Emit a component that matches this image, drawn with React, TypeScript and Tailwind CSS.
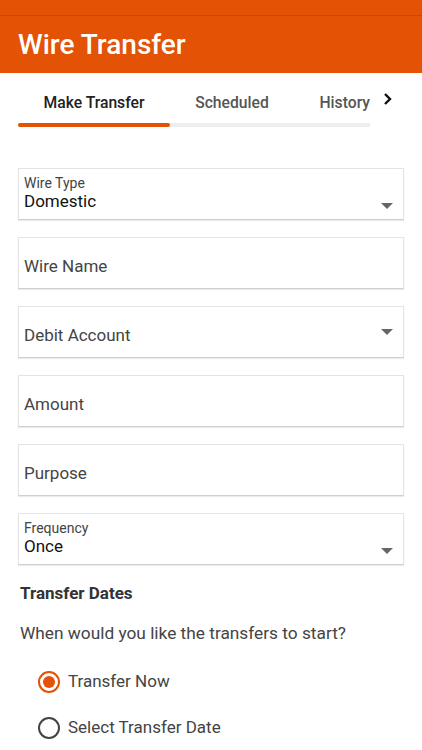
import React from 'react';

const Caret = () => (
  <svg width="12" height="6" viewBox="0 0 12 6" className="shrink-0">
    <path d="M0 0h12L6 6z" fill="#666" />
  </svg>
);

const Field = ({ label, value, caret }: { label?: string; value: string; caret?: boolean }) => (
  <div className="h-[52px] bg-white border border-[#e4e4e4] border-b-[#cfcfcf] shadow-[0_1px_1px_rgba(0,0,0,0.08)] flex items-center pl-[5px] pr-[10px]">
    {label ? (
      <div className="flex-1 flex items-end pb-[10px] h-full">
        <div className="flex-1 flex flex-col justify-center h-full pt-[8px]">
          <span className="text-[14px] leading-[16px] text-[#444]">{label}</span>
          <span className="text-[17px] leading-[20px] text-[#111]">{value}</span>
        </div>
        {caret && <Caret />}
      </div>
    ) : (
      <>
        <span className="flex-1 text-[17px] text-[#444] pt-[9px]">{value}</span>
        {caret && <Caret />}
      </>
    )}
  </div>
);

export default function App() {
  return (
    <div className="w-[422px] h-[750px] bg-white overflow-hidden font-['Roboto',sans-serif]">
      <div className="h-[16px] bg-[#e35205] border-b border-[#c94804]" />
      <div className="h-[57px] bg-[#e35205] flex items-center px-[18px]">
        <h1 className="text-white text-[28px] font-medium leading-none">Wire Transfer</h1>
      </div>

      <div className="flex items-start pl-[18px] pt-[18px]">
        <div className="w-[352px]">
          <div className="flex text-[15.7px] font-medium">
            <div className="w-[152px] text-center text-[#222]">Make Transfer</div>
            <div className="w-[124px] text-center text-[#555]">Scheduled</div>
            <div className="flex-1 text-right text-[#555]">History</div>
          </div>
          <div className="mt-[8px] h-[4px] bg-[#eeeeee] flex">
            <div className="w-[152px] h-full bg-[#e35205] rounded-full" />
          </div>
        </div>
        <svg width="10" height="14" viewBox="0 0 10 14" className="ml-[13px] mt-[1px]">
          <path d="M2 2l5 5-5 5" stroke="#111" strokeWidth="2.4" fill="none" />
        </svg>
      </div>

      <div className="px-[18px] pt-[41px] flex flex-col gap-[17px]">
        <Field label="Wire Type" value="Domestic" caret />
        <Field value="Wire Name" />
        <Field value="Debit Account" caret />
        <Field value="Amount" />
        <Field value="Purpose" />
        <Field label="Frequency" value="Once" caret />
      </div>

      <div className="px-[20px] pt-[16px]">
        <div className="text-[17px] font-bold text-[#333]">Transfer Dates</div>
        <div className="mt-[15px] text-[17.3px] text-[#444]">When would you like the transfers to start?</div>
        <div className="mt-[22px] pl-[18px] flex flex-col gap-[21px]">
          <div className="flex items-center gap-[8px]">
            <span className="w-[22px] h-[22px] rounded-full border-2 border-[#e35205] flex items-center justify-center">
              <span className="w-[12px] h-[12px] rounded-full bg-[#e35205]" />
            </span>
            <span className="text-[17px] text-[#444]">Transfer Now</span>
          </div>
          <div className="flex items-center gap-[8px]">
            <span className="w-[22px] h-[22px] rounded-full border-2 border-[#444]" />
            <span className="text-[17px] text-[#444]">Select Transfer Date</span>
          </div>
        </div>
      </div>
    </div>
  );
}
